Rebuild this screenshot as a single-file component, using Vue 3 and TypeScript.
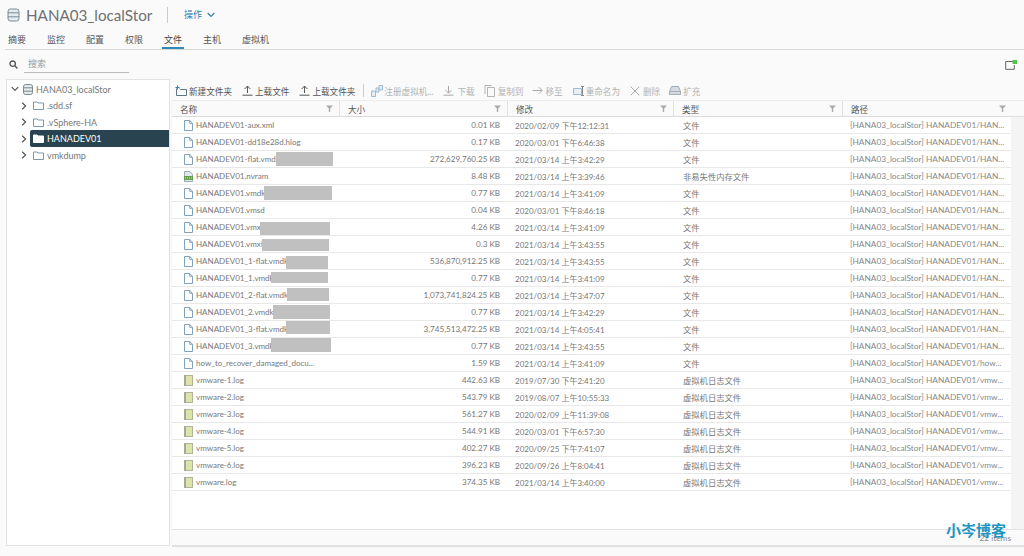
<script setup lang="ts">
interface FileRow {
  name: string;
  size: string;
  modified: string;
  kind: "file" | "nvram" | "log";
  type: string;
  path: string;
  // grey patch over part of the name: left, top, width, height inside the row
  patch?: [number, number, number, number];
}

const DS = "[HANA03_localStor] HANADEV01/";

function f(name: string, size: string, modified: string, path: string, patch?: [number, number, number, number]): FileRow {
  return { name, size, modified, kind: "file", type: "文件", path: DS + path, patch };
}
function log(name: string, size: string, modified: string): FileRow {
  return { name, size, modified, kind: "log", type: "虚拟机日志文件", path: DS + "vmw..." };
}

const rows: FileRow[] = [
  f("HANADEV01-aux.xml", "0.01 KB", "2020/02/09 下午12:12:31", "HAN..."),
  f("HANADEV01-dd18e28d.hlog", "0.17 KB", "2020/03/01 下午6:46:38", "HAN..."),
  f("HANADEV01-flat.vmdk", "272,629,760.25 KB", "2021/03/14 上午3:42:29", "HAN...", [104, 1, 57, 14]),
  { name: "HANADEV01.nvram", size: "8.48 KB", modified: "2021/03/14 上午3:39:46", kind: "nvram", type: "非易失性内存文件", path: DS + "HAN..." },
  f("HANADEV01.vmdk", "0.77 KB", "2021/03/14 上午3:41:09", "HAN...", [92, 1, 68, 14]),
  f("HANADEV01.vmsd", "0.04 KB", "2020/03/01 下午8:46:18", "HAN..."),
  f("HANADEV01.vmx", "4.26 KB", "2021/03/14 上午3:41:09", "HAN...", [88, 3, 70, 13]),
  f("HANADEV01.vmxf", "0.3 KB", "2021/03/14 上午3:43:55", "HAN...", [90, 3, 67, 12]),
  f("HANADEV01_1-flat.vmdk", "536,870,912.25 KB", "2021/03/14 上午3:43:55", "HAN...", [114, 3, 42, 13]),
  f("HANADEV01_1.vmdk", "0.77 KB", "2021/03/14 上午3:41:09", "HAN...", [99, 2, 57, 11]),
  f("HANADEV01_2-flat.vmdk", "1,073,741,824.25 KB", "2021/03/14 上午3:47:07", "HAN...", [115, 1, 42, 13]),
  f("HANADEV01_2.vmdk", "0.77 KB", "2021/03/14 上午3:42:29", "HAN...", [101, 1, 57, 14]),
  f("HANADEV01_3-flat.vmdk", "3,745,513,472.25 KB", "2021/03/14 上午4:05:41", "HAN...", [114, 0, 44, 13]),
  f("HANADEV01_3.vmdk", "0.77 KB", "2021/03/14 上午3:43:55", "HAN...", [99, 0, 60, 14]),
  f("how_to_recover_damaged_docu...", "1.59 KB", "2021/03/14 上午3:41:09", "how..."),
  log("vmware-1.log", "442.63 KB", "2019/07/30 下午2:41:20"),
  log("vmware-2.log", "543.79 KB", "2019/08/07 上午10:55:33"),
  log("vmware-3.log", "561.27 KB", "2020/02/09 上午11:39:08"),
  log("vmware-4.log", "544.91 KB", "2020/03/01 下午6:57:30"),
  log("vmware-5.log", "402.27 KB", "2020/09/25 下午7:41:07"),
  log("vmware-6.log", "396.23 KB", "2020/09/26 上午8:04:41"),
  log("vmware.log", "374.35 KB", "2021/03/14 上午3:40:00"),
];

const columns = ["名称", "大小", "修改", "类型", "路径"];
const tabs = ["摘要", "监控", "配置", "权限", "文件", "主机", "虚拟机"];
const folders = [".sdd.sf", ".vSphere-HA", "HANADEV01", "vmkdump"];
</script>

<template>
  <div class="page">
    <header class="title-bar">
      <svg class="db-big" width="13" height="14" viewBox="0 0 13 14" fill="none" stroke="#7a8a94">
        <rect x="1" y="1" width="11" height="12" rx="2.5" fill="#e4eaee" />
        <path d="M1 4.8h11M1 8.8h11" />
      </svg>
      <h1>HANA03_localStor</h1>
      <span class="title-sep"></span>
      <span class="actions">操作</span>
      <svg width="8" height="6" viewBox="0 0 8 6" fill="none" stroke="#2f7fb5" stroke-width="1.2">
        <path d="M.7 1l3.3 3.4L7.3 1" />
      </svg>
    </header>

    <nav class="tabs">
      <span v-for="t in tabs" :key="t" class="tab" :class="{ active: t === '文件' }">{{ t }}</span>
    </nav>

    <div class="search-row">
      <svg width="9" height="9" viewBox="0 0 9 9" fill="none" stroke="#555" stroke-width="1.4">
        <circle cx="3.7" cy="3.7" r="2.7" />
        <path d="M5.8 5.8l2.6 2.6" />
      </svg>
      <div class="search-box">搜索</div>
      <svg class="launch" width="12" height="10" viewBox="0 0 12 10" fill="none">
        <path d="M8 1.5H.7v7.8h8.6V5" stroke="#666" />
        <rect x="7.5" y="0" width="4.5" height="4" fill="#55c24a" />
      </svg>
    </div>

    <main class="main">
      <aside class="tree">
        <div class="tree-row root">
          <svg class="chev" width="8" height="8" viewBox="0 0 8 8" fill="none" stroke="#555" stroke-width="1.2">
            <path d="M.8 2.2L4 5.5l3.2-3.3" />
          </svg>
          <svg width="10" height="11" viewBox="0 0 10 11" fill="none" stroke="#7a8a94">
            <rect x=".5" y=".5" width="9" height="10" rx="2" fill="#e4eaee" />
            <path d="M.5 3.8h9M.5 7.2h9" />
          </svg>
          <span>HANA03_localStor</span>
        </div>
        <div v-for="name in folders" :key="name" class="tree-row child">
          <svg class="chev" width="6" height="8" viewBox="0 0 6 8" fill="none" stroke="#555" stroke-width="1.2">
            <path d="M1.2.8L4.6 4 1.2 7.2" />
          </svg>
          <div class="tree-label" :class="{ selected: name === 'HANADEV01' }">
            <svg width="11" height="9" viewBox="0 0 11 9" :fill="name === 'HANADEV01' ? '#fff' : 'none'" :stroke="name === 'HANADEV01' ? '#fff' : '#7d98ab'">
              <path d="M.5 8.5V1h3.6l.9 1h5.5v6.5z" />
            </svg>
            <span>{{ name }}</span>
          </div>
        </div>
      </aside>

      <section class="content">
        <div class="toolbar">
          <span class="tool on first">
            <svg width="12" height="11" viewBox="0 0 12 11" fill="none" stroke="#5b7688">
              <path d="M1.5 3.5v7h10V4.5H5.5l-1-1" />
              <path d="M2.5.5v4M.5 2.5h4" stroke="#2f7fb5" />
            </svg>
            新建文件夹
          </span>
          <span class="tool on">
            <svg width="11" height="11" viewBox="0 0 11 11" fill="none" stroke="#555">
              <path d="M5.5 8V1.2M2.6 4l2.9-3 2.9 3M.5 10.2h10" />
            </svg>
            上载文件
          </span>
          <span class="tool on">
            <svg width="11" height="11" viewBox="0 0 11 11" fill="none" stroke="#555">
              <path d="M5.5 8V1.2M2.6 4l2.9-3 2.9 3M.5 10.2h10" />
            </svg>
            上载文件夹
          </span>
          <span class="tool-sep"></span>
          <span class="tool reg">
            <svg width="12" height="12" viewBox="0 0 12 12" fill="none" stroke="#9dbcd2">
              <path d="M.5 6h4v5.5h-4zM5 3h3v4H5zM8 .5h3.5V5H8z" fill="#e2edf4" />
            </svg>
            注册虚拟机...
          </span>
          <span class="tool wide">
            <svg width="11" height="11" viewBox="0 0 11 11" fill="none" stroke="#a9a9a9">
              <path d="M5.5 1v7M2.6 5.2l2.9 3 2.9-3M.5 10.2h10" />
            </svg>
            下载
          </span>
          <span class="tool wide">
            <svg width="11" height="12" viewBox="0 0 11 12" fill="none" stroke="#b5b5b5">
              <path d="M3.5 2.5h7v9h-7zM1 9V.5h6.5" />
            </svg>
            复制到
          </span>
          <span class="tool">
            <svg width="11" height="9" viewBox="0 0 11 9" fill="none" stroke="#a9a9a9">
              <path d="M.5 4.5h9.5M6.8 1.2l3.3 3.3-3.3 3.3" />
            </svg>
            移至
          </span>
          <span class="tool reg">
            <svg width="12" height="10" viewBox="0 0 12 10" fill="none" stroke="#9dbcd2">
              <path d="M.5 2.5h8v6h-8z" fill="#e8f0f5" />
              <path d="M9.5.5v9M8 .5h3M8 9.5h3" stroke="#888" />
            </svg>
            重命名为
          </span>
          <span class="tool wide">
            <svg width="10" height="10" viewBox="0 0 10 10" fill="none" stroke="#a9a9a9">
              <path d="M.7.7l8.6 8.6M9.3.7L.7 9.3" />
            </svg>
            删除
          </span>
          <span class="tool">
            <svg width="12" height="9" viewBox="0 0 12 9" fill="#d5dbe0" stroke="#a3adb5">
              <path d="M2.5.5h7l2 5v3H.5v-3z" />
              <path d="M.5 5.5h11" />
            </svg>
            扩充
          </span>
        </div>

        <div class="grid">
          <div class="head">
            <div v-for="c in columns" :key="c" class="head-cell">
              <span>{{ c }}</span>
              <svg width="7" height="7" viewBox="0 0 7 7" fill="#aaa"><path d="M0 .5h7L4.2 3.6V7H2.8V3.6z" /></svg>
            </div>
          </div>
          <div class="body">
            <div class="rows">
              <div v-for="r in rows" :key="r.name" class="row">
                <div class="cell name">
                  <svg v-if="r.kind === 'file'" width="9" height="11" viewBox="0 0 9 11" fill="#fff" stroke="#7fa3bd">
                    <path d="M.5.5h5.2l2.8 2.8v7.2h-8z" />
                    <path d="M5.7.5v2.8h2.8" fill="none" />
                  </svg>
                  <svg v-else-if="r.kind === 'nvram'" width="9" height="11" viewBox="0 0 9 11">
                    <path d="M.5.5h5.2l2.8 2.8v7.2h-8z" fill="#e3e8ec" stroke="#9aabb7" />
                    <rect x="0" y="5" width="9" height="4" fill="#62a04e" />
                    <path d="M1 7h7" stroke="#dcebcf" stroke-dasharray="1 1" />
                  </svg>
                  <svg v-else width="9" height="11" viewBox="0 0 9 11">
                    <rect x=".5" y=".5" width="8" height="10" fill="#dee3a9" stroke="#aeb39a" />
                    <rect x="0" y="0" width="2" height="11" fill="#a3aa96" />
                  </svg>
                  <span class="name-text">{{ r.name }}</span>
                  <i
                    v-if="r.patch"
                    class="patch"
                    :style="{ left: r.patch[0] + 'px', top: r.patch[1] + 'px', width: r.patch[2] + 'px', height: r.patch[3] + 'px' }"
                  ></i>
                </div>
                <div class="cell size">{{ r.size }}</div>
                <div class="cell date">{{ r.modified }}</div>
                <div class="cell kind">{{ r.type }}</div>
                <div class="cell path">{{ r.path }}</div>
              </div>
            </div>
            <div class="scroll-track"></div>
          </div>
          <footer class="foot">22 items</footer>
          <div class="watermark">小岑博客</div>
        </div>
      </section>
    </main>
  </div>
</template>

<style>
html, body {
  margin: 0;
  background: #f7f7f7;
}
</style>

<style scoped>
.page {
  width: 1024px;
  height: 556px;
  display: flex;
  flex-direction: column;
  overflow: hidden;
  background: #fafafa;
  font-family: "Lato", "Noto Sans CJK SC", sans-serif;
  font-size: 9px;
  color: #666;
}
.title-bar {
  height: 29px;
  display: flex;
  align-items: center;
  padding-left: 7px;
  box-sizing: border-box;
}
.title-bar h1 {
  margin: 0 0 0 6px;
  font-size: 15.2px;
  font-weight: 400;
  color: #707070;
  width: 141px;
  white-space: nowrap;
}
.title-sep {
  width: 1px;
  height: 16px;
  background: #ccc;
}
.actions {
  margin: 0 5px 0 16px;
  color: #2f7fb5;
}
.tabs {
  height: 20px;
  margin-left: 5px;
  padding-left: 1px;
  display: flex;
  gap: 17px;
  border-bottom: 1px solid #d8d8d8;
  box-sizing: content-box;
}
.tab {
  height: 20px;
  line-height: 22px;
  padding: 0 2px;
  color: #555;
  box-sizing: border-box;
}
.tab.active {
  color: #444;
  border-bottom: 2px solid #2f87c0;
}
.search-row {
  height: 29px;
  display: flex;
  align-items: center;
  padding: 0 7px 0 9px;
}
.search-box {
  width: 97px;
  margin: 1px 0 0 6px;
  padding: 0 4px 1px;
  height: 14px;
  line-height: 13px;
  color: #999;
  border-bottom: 1px solid #bbb;
}
.launch {
  margin-left: auto;
}
.main {
  flex: 1;
  display: flex;
  gap: 2px;
  min-height: 0;
  padding: 0 0 10px 6px;
}
.tree {
  width: 164px;
  box-sizing: border-box;
  background: #fff;
  border: 1px solid #e2e2e2;
  padding-top: 1px;
}
.tree-row {
  height: 16.5px;
  display: flex;
  align-items: center;
}
.tree-row.root {
  padding-left: 4px;
  gap: 3px;
  color: #777;
}
.tree-row.root svg + svg {
  margin-left: 1px;
}
.tree-row.child {
  padding-left: 14px;
}
.tree-label {
  flex: 1;
  height: 17px;
  margin-left: 3px;
  padding-left: 3px;
  display: flex;
  align-items: center;
  gap: 3px;
  color: #777;
  border-radius: 2px 0 0 2px;
}
.tree-label.selected {
  background: #2a4350;
  color: #fff;
}
.content {
  flex: 1;
  min-width: 0;
  display: flex;
  flex-direction: column;
}
.toolbar {
  height: 21px;
  box-sizing: border-box;
  padding-top: 2px;
  display: flex;
  align-items: center;
  color: #b3b3b3;
  font-size: 8.6px;
  white-space: nowrap;
}
.tool {
  display: flex;
  align-items: center;
  gap: 2px;
  margin-right: 10px;
}
.tool.first {
  margin-left: 3px;
}
.tool.on {
  color: #555;
}
.tool.reg {
  gap: 1px;
}
.tool.wide {
  gap: 3px;
  margin-right: 9px;
}
.tool-sep {
  width: 1px;
  height: 13px;
  background: #ccc;
  margin: 0 7px 0 -2px;
}
.grid {
  flex: 1;
  min-height: 0;
  position: relative;
  display: flex;
  flex-direction: column;
  background: #fff;
  box-shadow: 0 1px 1px rgba(0, 0, 0, 0.1);
}
.head {
  flex: none;
  height: 17px;
  box-sizing: border-box;
  display: grid;
  grid-template-columns: 168px 168px 166px 169px 1fr;
  background: #fafafa;
  border-top: 1px solid #ededed;
  border-bottom: 1px solid #dcdcdc;
  font-size: 8.6px;
}
.head-cell {
  display: flex;
  align-items: center;
  justify-content: space-between;
  padding: 0 6px 0 8px;
  color: #555;
  border-right: 1px solid #e2e2e2;
}
.head-cell:last-child {
  border-right: 0;
  padding-right: 18px;
}
.body {
  flex: 1;
  min-height: 0;
  display: flex;
}
.rows {
  flex: 1;
  min-width: 0;
}
.scroll-track {
  width: 13px;
  background: #f4f4f4;
}
.row {
  height: 17px;
  box-sizing: border-box;
  display: grid;
  grid-template-columns: 168px 168px 166px 169px 1fr;
  border-bottom: 1px solid #e8e8e8;
  align-items: center;
  color: #777;
  font-size: 8.3px;
}
.cell {
  padding-left: 7px;
  white-space: nowrap;
  overflow: hidden;
}
.cell.name {
  position: relative;
  height: 16px;
  display: flex;
  align-items: center;
  gap: 3px;
  padding-left: 12px;
  overflow: visible;
  font-size: 8px;
}
.patch {
  position: absolute;
  background: #c0c0c0;
}
.cell.size {
  text-align: right;
  padding: 0 8px 0 0;
  font-size: 8.1px;
}
.cell.date {
  font-size: 8px;
}
.cell.kind {
  padding-left: 9px;
}
.cell.path {
  color: #888;
}
.foot {
  flex: none;
  height: 17px;
  box-sizing: border-box;
  line-height: 16px;
  text-align: right;
  padding-right: 13px;
  background: #fafafa;
  border-top: 1px solid #e2e2e2;
  border-bottom: 1px solid #e2e2e2;
  color: #888;
  font-size: 8.3px;
}
.watermark {
  position: absolute;
  right: 18px;
  bottom: 8px;
  font-size: 15px;
  line-height: 15px;
  font-weight: 700;
  color: #1e96bf;
}
</style>
